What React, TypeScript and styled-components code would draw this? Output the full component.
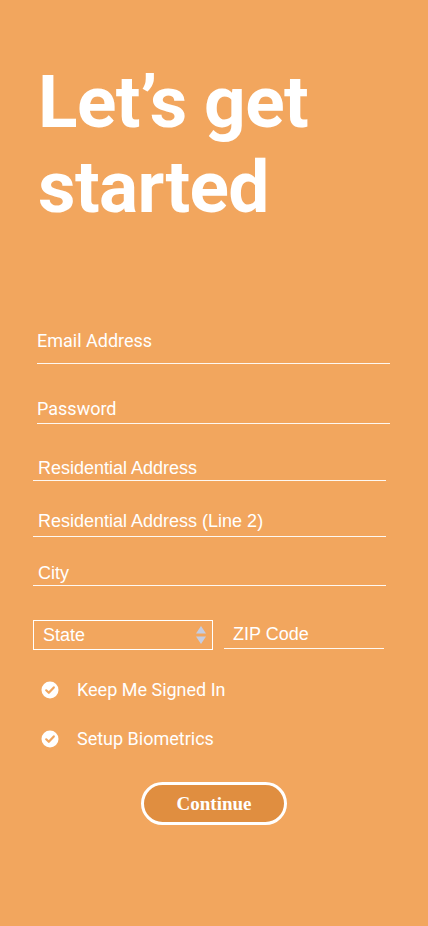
import React from "react"
import styled, { createGlobalStyle } from "styled-components"

const GlobalStyle = createGlobalStyle`
  html, body {
    margin: 0;
    padding: 0;
    background: #f2a65e;
  }
  * {
    box-sizing: border-box;
  }
`

const Page = styled.main`
  min-height: 926px;
  background: #f2a65e;
  padding: 60px 38px 0 33px;
  display: flex;
  flex-direction: column;
  color: #fff;
`

const Title = styled.h1`
  margin: 0 0 0 5px;
  font-family: Roboto, "Liberation Sans", sans-serif;
  font-weight: 700;
  font-size: 73px;
  line-height: 85px;
  letter-spacing: -0.6px;
  color: #fff;
`

const Form = styled.form`
  display: flex;
  flex-direction: column;
  margin-top: 100px;
`

// $line: where the underline starts, relative to the form's left edge
const Field = styled.div<{ $gap: number; $pad: number; $line: number; $roboto?: boolean }>`
  margin: ${p => p.$gap}px ${p => 4 - p.$line}px 0 ${p => p.$line}px;
  padding: 0 0 ${p => p.$pad}px ${p => (p.$line ? 0 : 5)}px;
  border-bottom: 1px solid rgba(255, 255, 255, 0.92);
  font-family: ${p => (p.$roboto ? "Roboto, " : "")}"Liberation Sans", Arial, sans-serif;
  font-size: 18px;
  line-height: 22px;
  color: #fff;
`

const Row = styled.div`
  display: flex;
  gap: 11px;
  margin-top: 34px;
  height: 30px;
`

const SelectBox = styled.div`
  width: 180px;
  height: 30px;
  border: 1px solid #fff;
  display: flex;
  align-items: center;
  justify-content: space-between;
  padding: 0 6px 0 9px;
  font-family: "Liberation Sans", Arial, sans-serif;
  font-size: 18px;
  line-height: 22px;
`

const ZipField = styled.div`
  width: 160px;
  height: 29px;
  border-bottom: 1px solid rgba(255, 255, 255, 0.92);
  display: flex;
  align-items: center;
  padding-left: 9px;
  font-family: "Liberation Sans", Arial, sans-serif;
  font-size: 18px;
  line-height: 22px;
`

const Checks = styled.div`
  display: flex;
  flex-direction: column;
  gap: 27px;
  margin-top: 29px;
  padding-left: 8px;
`

const CheckRow = styled.label`
  display: flex;
  align-items: center;
  gap: 18px;
  font-family: Roboto, "Liberation Sans", sans-serif;
  font-size: 18px;
  line-height: 22px;
  color: #fff;
`

const ButtonWrap = styled.div`
  display: flex;
  justify-content: center;
  margin-top: 32px;
  padding-left: 5px;
`

const ContinueButton = styled.button`
  width: 146px;
  height: 43px;
  border: 3px solid #fff;
  border-radius: 22px;
  background: #e08e40;
  color: #fff;
  font-family: "Liberation Serif", "Times New Roman", serif;
  font-weight: 700;
  font-size: 19px;
  line-height: 1;
  padding: 0;
  cursor: pointer;
`

const CheckIcon = () => (
  <svg width="18" height="18" viewBox="0 0 18 18">
    <circle cx="9" cy="9" r="8.5" fill="#fff" />
    <polyline
      points="5.2,9.3 7.8,11.8 12.8,6.4"
      fill="none"
      stroke="#f2a65e"
      strokeWidth="2.2"
      strokeLinecap="round"
      strokeLinejoin="round"
    />
  </svg>
)

const SelectArrows = () => (
  <svg width="10" height="20" viewBox="0 0 10 20">
    <polygon points="5,1 10,8.5 0,8.5" fill="#c4cde3" />
    <polygon points="0,11.5 10,11.5 5,19" fill="#c4cde3" />
  </svg>
)

export default function App() {
  return (
    <>
      <GlobalStyle />
      <Page>
        <Title>
          Let’s get
          <br />
          started
        </Title>
        <Form onSubmit={e => e.preventDefault()}>
          <Field $gap={0} $pad={11} $line={4} $roboto>
            Email Address
          </Field>
          <Field $gap={34} $pad={3} $line={4} $roboto>
            Password
          </Field>
          <Field $gap={33} $pad={1} $line={0}>
            Residential Address
          </Field>
          <Field $gap={29} $pad={4} $line={0}>
            Residential Address (Line 2)
          </Field>
          <Field $gap={25} $pad={1} $line={0}>
            City
          </Field>
          <Row>
            <SelectBox>
              <span>State</span>
              <SelectArrows />
            </SelectBox>
            <ZipField>ZIP Code</ZipField>
          </Row>
          <Checks>
            <CheckRow>
              <CheckIcon />
              Keep Me Signed In
            </CheckRow>
            <CheckRow>
              <CheckIcon />
              Setup Biometrics
            </CheckRow>
          </Checks>
          <ButtonWrap>
            <ContinueButton type="submit">Continue</ContinueButton>
          </ButtonWrap>
        </Form>
      </Page>
    </>
  )
}
